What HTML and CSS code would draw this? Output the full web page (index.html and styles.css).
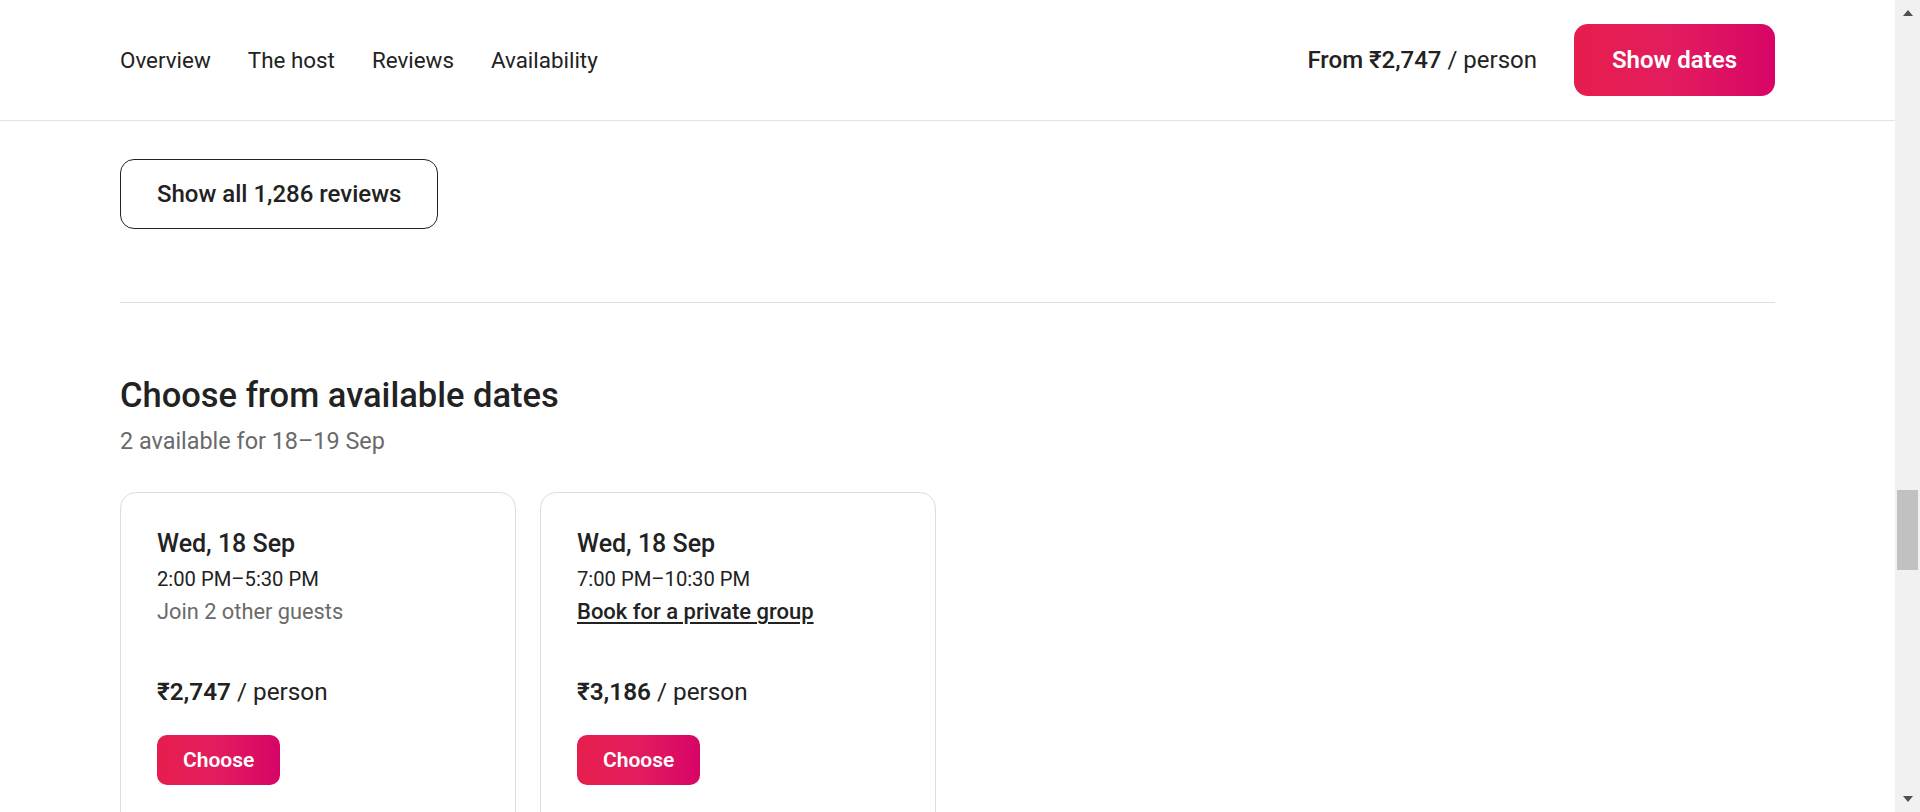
FILE: index.html
```html
<!DOCTYPE html>
<html lang="en">
<head>
<meta charset="utf-8">
<title>Experience – Availability</title>
<link rel="stylesheet" href="styles.css">
</head>
<body>
<div class="window">
  <div class="page">
    <header class="header">
      <nav class="nav">
        <a class="nav-link">Overview</a>
        <a class="nav-link">The host</a>
        <a class="nav-link">Reviews</a>
        <a class="nav-link">Availability</a>
      </nav>
      <div class="header-right">
        <div class="from"><span class="strong">From ₹2,747</span> / person</div>
        <button class="btn-primary btn-show">Show dates</button>
      </div>
    </header>
    <main class="main">
      <button class="btn-outline">Show all 1,286 reviews</button>
      <div class="divider"></div>
      <section class="section">
        <h2 class="title">Choose from available dates</h2>
        <div class="subtitle">2 available for 18–19 Sep</div>
        <div class="cards">
          <div class="card">
            <div class="date">Wed, 18 Sep</div>
            <div class="time">2:00 PM–5:30 PM</div>
            <div class="note">Join 2 other guests</div>
            <div class="price"><span class="strong">₹2,747</span> / person</div>
            <button class="btn-primary btn-choose">Choose</button>
          </div>
          <div class="card">
            <div class="date">Wed, 18 Sep</div>
            <div class="time">7:00 PM–10:30 PM</div>
            <div class="note"><a class="note-link">Book for a private group</a></div>
            <div class="price"><span class="strong">₹3,186</span> / person</div>
            <button class="btn-primary btn-choose">Choose</button>
          </div>
        </div>
      </section>
    </main>
  </div>
  <div class="scrollbar">
    <div class="arrow-up"></div>
    <div class="thumb"></div>
    <div class="arrow-down"></div>
  </div>
</div>
</body>
</html>
```

FILE: styles.css
```css
* { box-sizing: border-box; }
html, body { margin: 0; padding: 0; height: 100%; }
body {
  font-family: Roboto, "Noto Sans", "DejaVu Sans", sans-serif;
  color: #222222;
  background: #ffffff;
  overflow: hidden;
}
.window { display: flex; height: 812px; }
.page { flex: 1; min-width: 0; overflow: hidden; }

.header {
  height: 121px;
  border-bottom: 1px solid #e3e3e3;
  display: flex;
  align-items: center;
  justify-content: space-between;
  padding: 0 120px;
}
.nav { display: flex; gap: 37px; }
.nav-link { font-size: 22.4px; font-weight: 400; color: #222222; text-decoration: none; }
.header-right { display: flex; align-items: center; gap: 37px; }
.from { font-size: 24px; color: #222222; }
.strong { font-weight: 600; }
.from .strong { font-weight: 500; }

button { font-family: inherit; cursor: pointer; }
.btn-primary {
  display: flex;
  align-items: center;
  justify-content: center;
  border: 0;
  color: #ffffff;
  font-weight: 600;
  background: linear-gradient(to right, #e61e4d 0%, #e31c5f 50%, #d70466 100%);
}
.btn-show { height: 72px; padding: 0 38px; border-radius: 14px; font-size: 24px; }

.main { padding: 38px 120px 0; }
.btn-outline {
  display: flex;
  align-items: center;
  height: 70px;
  padding: 0 36px;
  border: 1px solid #222222;
  border-radius: 14px;
  background: #ffffff;
  color: #222222;
  font-size: 24px;
  font-weight: 500;
}
.divider { height: 1px; background: #dddddd; margin-top: 73px; }
.section { padding-top: 72px; }
.title { margin: 0; font-size: 34.5px; font-weight: 500; line-height: 40px; }
.subtitle { margin-top: 11px; font-size: 23.4px; line-height: 30px; color: #6a6a6a; }

.cards { display: flex; gap: 24px; margin-top: 36px; }
.card {
  width: 396px;
  min-height: 420px;
  border: 1px solid #dddddd;
  border-radius: 16px;
  padding: 36px;
}
.date { font-size: 25px; font-weight: 500; line-height: 30px; }
.time { margin-top: 7px; font-size: 20.2px; line-height: 26px; }
.note { margin-top: 7px; font-size: 21.8px; line-height: 26px; color: #6a6a6a; }
.note-link {
  color: #222222;
  font-size: 22px;
  font-weight: 500;
  text-decoration: underline;
  text-underline-offset: 3px;
}
.price { margin-top: 52px; font-size: 24.3px; line-height: 30px; }
.btn-choose { margin-top: 28px; height: 50px; padding: 0 26px; border-radius: 10px; font-size: 21px; }

.scrollbar {
  width: 25px;
  background: #f1f1f1;
  display: flex;
  flex-direction: column;
  align-items: center;
}
.arrow-up {
  width: 0; height: 0;
  margin-top: 10px;
  border-left: 5.5px solid transparent;
  border-right: 5.5px solid transparent;
  border-bottom: 6px solid #505050;
}
.thumb { margin-top: 474px; width: 21px; height: 80px; background: #c1c1c1; }
.arrow-down {
  width: 0; height: 0;
  margin-top: auto;
  margin-bottom: 10px;
  border-left: 5.5px solid transparent;
  border-right: 5.5px solid transparent;
  border-top: 6px solid #505050;
}
```
